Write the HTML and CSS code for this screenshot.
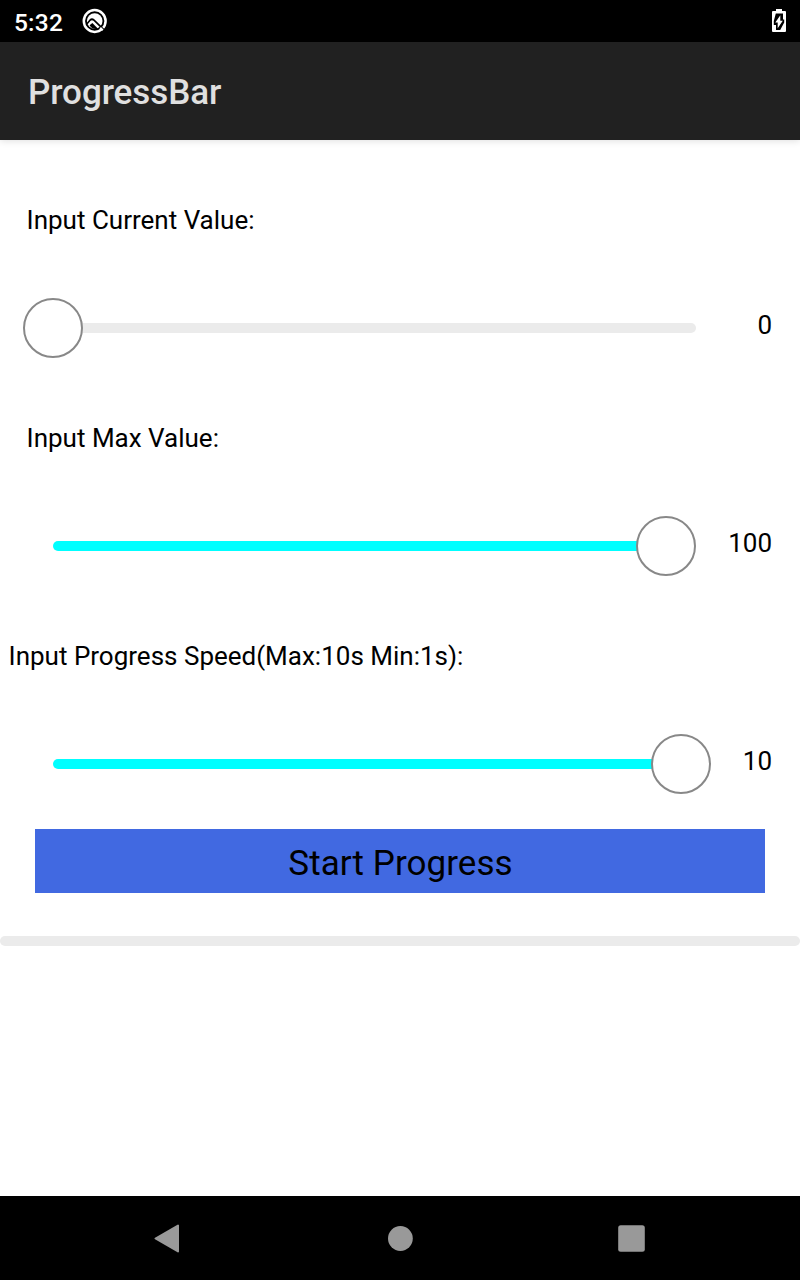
FILE: index.html
```html
<!DOCTYPE html>
<html lang="en">
<head>
<meta charset="utf-8">
<title>ProgressBar</title>
<link rel="stylesheet" href="styles.css">
</head>
<body>
<div class="status">
  <span class="clock">5:32</span>
  <svg class="q-icon" width="26" height="26" viewBox="0 0 26 26">
    <circle cx="12.7" cy="13" r="10.9" fill="none" stroke="#fff" stroke-width="2.5"/>
    <circle cx="12.7" cy="13" r="7.8" fill="#fff"/>
    <path d="M4.8 16L8.2 12Q10 10.4 12 12.2L22.5 22.3" fill="none" stroke="#000" stroke-width="1.7"/>
    <path d="M7.6 17.2L10.4 15.1L16 20.8Q10.5 22 7.6 17.2" fill="#000"/>
    <path d="M18.2 19.7L20.8 22.3" stroke="#fff" stroke-width="2"/>
  </svg>
  <svg class="battery" width="14" height="24" viewBox="0 0 14 24">
    <path d="M4 0h6v2h3q1 0 1 1v19q0 1-1 1H1q-1 0-1-1V3q0-1 1-1h3z" fill="#fff"/>
    <path d="M3.8 4.5H11V10.5h1.2v3L8.2 21H4V16H1.8v-4z" fill="#000"/>
    <path d="M8.3 6.2v5.5h2.5l-5.1 7.5v-5.7H3.3z" fill="#fff"/>
  </svg>
</div>
<header class="appbar">ProgressBar</header>
<main class="content">
  <section class="field">
    <div class="label">Input Current Value:</div>
    <div class="row">
      <div class="slider"><div class="thumb"></div><div class="track"></div></div>
      <div class="value">0</div>
    </div>
  </section>
  <section class="field">
    <div class="label">Input Max Value:</div>
    <div class="row">
      <div class="slider full"><div class="track"></div><div class="thumb"></div></div>
      <div class="value">100</div>
    </div>
  </section>
  <section class="field">
    <div class="label wide">Input Progress Speed(Max:10s Min:1s):</div>
    <div class="row">
      <div class="slider full long"><div class="track"></div><div class="thumb"></div></div>
      <div class="value">10</div>
    </div>
  </section>
  <button class="start">Start Progress</button>
  <div class="progress"></div>
</main>
<nav class="nav">
  <svg width="800" height="84" viewBox="0 0 800 84">
    <path d="M155.5 42.5L178 29.5V55.5Z" fill="#999" stroke="#999" stroke-width="2" stroke-linejoin="round"/>
    <circle cx="400.4" cy="42.5" r="12.4" fill="#999"/>
    <rect x="618.2" y="29.2" width="26.6" height="26.6" rx="2.5" fill="#999"/>
  </svg>
</nav>
</body>
</html>
```
FILE: styles.css
```css
* { box-sizing: border-box; }
body {
  margin: 0;
  width: 800px;
  height: 1280px;
  display: flex;
  flex-direction: column;
  background: #fff;
  color: #000;
  font-family: Roboto, "Liberation Sans", sans-serif;
}
.status {
  height: 42px;
  flex: none;
  display: flex;
  align-items: center;
  padding: 0 14px;
  background: #000;
  color: #fff;
}
.clock {
  width: 67.5px;
  font-size: 24.5px;
  letter-spacing: 0.2px;
  font-weight: 500;
  line-height: 40px;
  padding-top: 4px;
}
.battery { margin-left: auto; }
.appbar {
  height: 98px;
  flex: none;
  padding: 2px 28px 0;
  line-height: 98px;
  background: #212121;
  color: #e0e0e0;
  font-size: 35px;
  letter-spacing: -0.08px;
  font-weight: 500;
  box-shadow: 0 1px 7px rgba(0, 0, 0, 0.13);
}
.content {
  flex: 1;
  display: flex;
  flex-direction: column;
}
.field { padding-top: 60px; }
.label {
  height: 40px;
  padding-left: 26.6px;
  line-height: 40px;
  font-size: 26px;
}
.wide { padding-left: 8.6px; }
.row {
  display: flex;
  align-items: center;
  height: 60px;
  margin-top: 58px;
  padding: 0 28px 0 23px;
}
.slider {
  display: flex;
  align-items: center;
  width: 673px;
}
.full { padding-left: 30px; }
.long { width: 688px; }
.track {
  flex: 1;
  height: 10px;
  background: #ebebeb;
  border-radius: 0 5px 5px 0;
  margin-left: -2px;
}
.full .track {
  background: #0ff;
  border-radius: 5px 0 0 5px;
  margin: 0 -2px 0 0;
}
.thumb {
  flex: none;
  z-index: 1;
  width: 60px;
  height: 60px;
  border: 2px solid #888;
  border-radius: 50%;
  background: #fff;
}
.value {
  margin-left: auto;
  padding-bottom: 6px;
  font-size: 26px;
  line-height: 40px;
}
.start {
  height: 64px;
  margin: 35px 35px 43px;
  padding: 6px 0 0 1px;
  border: 0;
  background: #4169e1;
  color: #000;
  font: 35px/58px Roboto, sans-serif;
  letter-spacing: 0.05px;
}
.progress {
  height: 10px;
  border-radius: 5px;
  background: #ebebeb;
}
.nav {
  flex: none;
  height: 84px;
  background: #000;
}
.nav svg { display: block; }
```
